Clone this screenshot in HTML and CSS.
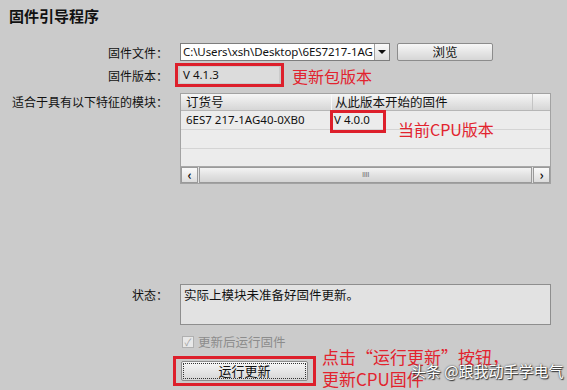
FILE: index.html
```html
<!DOCTYPE html>
<html lang="zh-CN">
<head>
    <meta charset="UTF-8">
    <title>固件引导程序</title>
    <link rel="stylesheet" href="styles.css">
</head>
<body>
    <div class="panel">
        <div class="title">固件引导程序</div>

        <div class="row row-file">
            <div class="label">固件文件：</div>
            <div class="combo">
                <span class="combo-text">C:\Users\xsh\Desktop\6ES7217-1AG</span>
                <span class="combo-arrow"><i></i></span>
            </div>
            <button class="btn btn-browse">浏览</button>
        </div>

        <div class="row row-version">
            <div class="label">固件版本：</div>
            <div class="mark">
                <div class="field">V 4.1.3</div>
            </div>
            <div class="note">更新包版本</div>
        </div>

        <div class="row row-modules">
            <div class="label">适合于具有以下特征的模块：</div>
            <div class="grid">
                <div class="grid-head">
                    <div class="cell c1">订货号</div>
                    <div class="cell c2">从此版本开始的固件</div>
                    <div class="cell c3"></div>
                </div>
                <div class="grid-row">
                    <div class="cell c1">6ES7 217-1AG40-0XB0</div>
                    <div class="cell c2">V 4.0.0</div>
                </div>
                <div class="grid-row"></div>
                <div class="grid-row last"></div>
                <div class="hscroll">
                    <span class="sb-btn">&#8249;</span>
                    <span class="sb-track">IIII</span>
                    <span class="sb-btn">&#8250;</span>
                </div>
                <div class="mark-cell"></div>
                <div class="note note-cpu">当前CPU版本</div>
            </div>
        </div>

        <div class="row row-status">
            <div class="label">状态：</div>
            <div class="status">实际上模块未准备好固件更新。</div>
        </div>

        <div class="row row-check">
            <div class="label"></div>
            <label class="check"><span class="box">&#10003;</span>更新后运行固件</label>
        </div>

        <div class="row row-run">
            <div class="label"></div>
            <div class="mark mark-run">
                <button class="btn btn-run">运行更新</button>
            </div>
            <div class="note note-run">点击“运行更新”按钮，<br>更新CPU固件</div>
        </div>

        <div class="watermark">头条 @跟我动手学电气</div>
    </div>
</body>
</html>
```

FILE: styles.css
```css
* {
    margin: 0;
    padding: 0;
    box-sizing: border-box;
}
body {
    background: #cbcbcb;
    font-family: "Noto Sans CJK SC", "Liberation Sans", sans-serif;
    font-size: 12px;
    color: #111;
}
.panel {
    position: relative;
    width: 567px;
    height: 390px;
    overflow: hidden;
}
.title {
    height: 33px;
    padding-left: 9px;
    line-height: 32px;
    font-size: 15px;
    font-weight: 700;
}
.row {
    display: flex;
    align-items: center;
}
.label {
    width: 168px;
    flex: none;
    margin-right: 12px;
    text-align: right;
    font-size: 12px;
}
.row-file {
    margin-top: 10px;
    height: 18px;
}
.combo {
    display: flex;
    width: 210px;
    height: 18px;
    background: #fff;
    border: 1px solid #7d7d7d;
}
.combo-text {
    flex: 1;
    overflow: hidden;
    white-space: nowrap;
    padding-left: 2px;
    line-height: 16px;
    font-family: "Noto Sans", sans-serif;
    font-size: 11.5px;
    letter-spacing: -0.1px;
}
.combo-arrow {
    width: 15px;
    border-left: 1px solid #a0a0a0;
    background: linear-gradient(#fafafa, #dedede);
    display: flex;
    align-items: center;
    justify-content: center;
}
.combo-arrow i {
    border-left: 4px solid transparent;
    border-right: 4px solid transparent;
    border-top: 4px solid #111;
}
.btn {
    font-family: "Noto Sans CJK SC", sans-serif;
    font-size: 12.5px;
    color: #111;
    background: linear-gradient(#f7f7f7, #e6e6e6 50%, #d6d6d6);
    border: 1px solid #8c8c8c;
    border-radius: 2px;
}
.btn-browse {
    width: 96px;
    height: 18px;
    margin-left: 7px;
    line-height: 14px;
}
.row-version {
    margin-top: 2px;
    height: 24px;
}
.mark {
    border: 3px solid #dd1f2b;
    padding: 1px 2px;
    margin-left: -5px;
}
.field {
    width: 99px;
    height: 16px;
    padding-left: 3px;
    background: #dcdcdc;
    line-height: 16px;
    font-family: "Noto Sans", sans-serif;
    font-size: 11.5px;
}
.note {
    color: #e2232e;
    font-size: 16px;
    line-height: 20px;
}
.row-version .note {
    margin-left: 8px;
    margin-top: 1px;
}
.row-modules {
    margin-top: 6px;
    align-items: flex-start;
}
.row-modules .label {
    line-height: 16px;
    margin-top: 1px;
}
.grid {
    position: relative;
    width: 371px;
    height: 91px;
    background: #ececec;
    border: 1px solid #a2a2a2;
    display: flex;
    flex-direction: column;
}
.grid-head {
    display: flex;
    height: 17px;
    background: linear-gradient(#f6f6f6, #e4e4e4 55%, #d6d6d6);
    border-bottom: 1px solid #b6b6b6;
    font-size: 12.5px;
    line-height: 16px;
}
.grid-row {
    display: flex;
    height: 19px;
    border-bottom: 1px solid #d4d4d4;
    line-height: 18px;
    font-family: "Noto Sans", sans-serif;
    font-size: 11.5px;
}
.grid-row.last {
    flex: 1;
    border-bottom: none;
}
.cell {
    padding-left: 5px;
    white-space: nowrap;
}
.c1 {
    width: 150px;
}
.c2 {
    width: 202px;
    padding-left: 3px;
}
.grid-head .c2 {
    border-left: 1px solid #f8f8f8;
    border-right: 1px solid #c4c4c4;
}
.hscroll {
    display: flex;
    height: 17px;
    border-top: 1px solid #a8a8a8;
    background: #e2e2e2;
}
.sb-btn {
    width: 17px;
    border: 1px solid #9a9a9a;
    background: linear-gradient(#fafafa, #dcdcdc);
    text-align: center;
    font-size: 13px;
    font-weight: 700;
    line-height: 13px;
}
.sb-track {
    flex: 1;
    margin: 0 1px;
    border: 1px solid #9a9a9a;
    background: linear-gradient(#f4f4f4, #e2e2e2 50%, #d4d4d4);
    text-align: center;
    font-family: "Liberation Sans", sans-serif;
    font-size: 8px;
    letter-spacing: -0.5px;
    color: #777;
    line-height: 13px;
}
.mark-cell {
    position: absolute;
    left: 149px;
    top: 16px;
    width: 56px;
    height: 23px;
    border: 3px solid #dd1f2b;
}
.note-cpu {
    position: absolute;
    left: 217px;
    top: 25px;
}
.row-status {
    margin-top: 100px;
    align-items: flex-start;
}
.row-status .label {
    margin-top: 2px;
}
.status {
    width: 371px;
    height: 41px;
    background: #e2e2e2;
    border: 1px solid #8e8e8e;
    padding: 2px 3px;
    font-size: 12.5px;
    line-height: 16px;
}
.row-check {
    margin-top: 10px;
    height: 13px;
}
.check {
    display: flex;
    align-items: center;
    margin-left: 2px;
    color: #8c8c8c;
    font-size: 12.5px;
}
.box {
    width: 12px;
    height: 12px;
    margin-right: 4px;
    border: 1px solid #b0b0b0;
    background: #e8e8e8;
    color: #a0a0a0;
    font-size: 10px;
    line-height: 10px;
    text-align: center;
}
.row-run {
    margin-top: 8px;
    align-items: flex-start;
}
.mark-run {
    padding: 2px 5px;
    margin-left: -7px;
}
.btn-run {
    width: 127px;
    height: 20px;
    font-size: 13px;
    line-height: 16px;
    outline: 1px dotted #333;
    outline-offset: -3px;
}
.note-run {
    margin-left: 6px;
    margin-top: -10px;
    font-size: 17px;
    line-height: 22px;
}
.watermark {
    position: absolute;
    left: 411px;
    top: 360px;
    color: #fff;
    font-size: 15px;
    text-shadow: 0 0 2px #333, 1px 1px 1px #333;
}
```
